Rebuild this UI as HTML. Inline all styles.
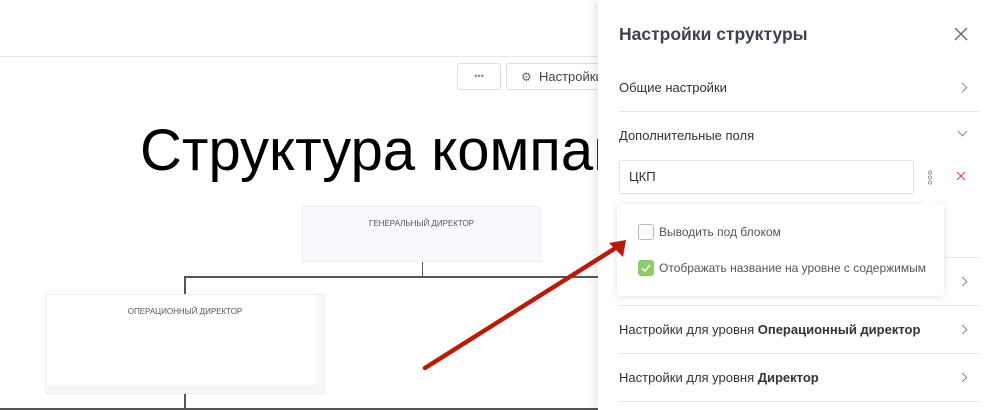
<!DOCTYPE html>
<html><head><meta charset="utf-8"><style>
*{box-sizing:border-box;margin:0;padding:0}
body{width:997px;height:410px;overflow:hidden;background:#fff;font-family:"Liberation Sans",sans-serif;position:relative}
.abs{position:absolute}
.panel{left:598px;top:0;width:399px;height:410px;background:#fff;box-shadow:-4px 0 8px rgba(0,0,0,.08)}
.row{position:absolute;left:21px;font-size:13px;color:#333}
.div{position:absolute;left:21px;width:360px;height:1px;background:#e6e6e6}
.chev{position:absolute;left:361px;width:7px;height:7px;border-right:1.2px solid #888;border-top:1.2px solid #888;transform:rotate(45deg)}
</style></head><body>
<div class="abs" style="left:0;top:56px;width:600px;height:1px;background:#e8e8e8"></div>
<div class="abs" style="left:457px;top:63px;width:44px;height:27px;border:1px solid #ddd;border-radius:3px;text-align:center;font-size:9px;color:#888;line-height:24px">•••</div>
<div class="abs" style="left:506px;top:63px;width:110px;height:27px;border:1px solid #ddd;border-radius:3px;font-size:13px;color:#444;line-height:25px;padding-left:14px"><span style="font-size:12px;color:#666">⚙</span>&nbsp;&nbsp;Настройки</div>
<div class="abs" style="left:140px;top:118px;font-size:58px;color:#000;white-space:nowrap;line-height:66px">Структура компании</div>
<div class="abs" style="left:302px;top:206px;width:239px;height:56px;background:#f8f9fc;border:1px solid #eceef3;font-size:8px;color:#555;text-align:center;padding-top:12px">ГЕНЕРАЛЬНЫЙ ДИРЕКТОР</div>
<div class="abs" style="left:422px;top:262px;width:1px;height:15px;background:#555"></div>
<div class="abs" style="left:184px;top:276px;width:420px;height:1.5px;background:#555"></div>
<div class="abs" style="left:184px;top:276px;width:1.5px;height:18px;background:#555"></div>
<div class="abs" style="left:45px;top:294px;width:280px;height:100px;background:#fff;border:1px solid #eceef3;box-shadow:inset -8px -8px 0 #f7f7f9;font-size:8px;color:#555;text-align:center;padding-top:12px">ОПЕРАЦИОННЫЙ ДИРЕКТОР</div>
<div class="abs" style="left:184px;top:394px;width:1.5px;height:16px;background:#555"></div>
<div class="abs" style="left:0;top:408px;width:600px;height:1.5px;background:#555"></div>

<div class="abs panel">
 <div class="abs" style="left:21px;top:24px;font-size:17.5px;font-weight:bold;color:#3d4250">Настройки структуры</div>
 <svg class="abs" style="left:356px;top:27px" width="14" height="14"><path d="M1 1L13 13M13 1L1 13" stroke="#666" stroke-width="1.3"/></svg>
 <div class="row" style="top:80px">Общие настройки</div><div class="chev" style="top:84px"></div>
 <div class="div" style="top:111px"></div>
 <div class="row" style="top:128px">Дополнительные поля</div>
 <div class="abs" style="left:361px;top:128px;width:7px;height:7px;border-right:1.2px solid #888;border-bottom:1.2px solid #888;transform:rotate(45deg)"></div>
 <div class="abs" style="left:21px;top:160px;width:295px;height:34px;border:1px solid #e2e2e2;border-radius:3px;font-size:13px;color:#333;line-height:32px;padding-left:9px">ЦКП</div>
 <svg class="abs" style="left:328px;top:170px" width="8" height="16"><circle cx="4" cy="2.5" r="1.6" fill="none" stroke="#999"/><circle cx="4" cy="7.5" r="1.6" fill="none" stroke="#999"/><circle cx="4" cy="12.5" r="1.6" fill="none" stroke="#999"/></svg>
 <svg class="abs" style="left:358px;top:171px" width="10" height="10"><path d="M1 1L9 9M9 1L1 9" stroke="#e05050" stroke-width="1.2"/></svg>
 <div class="div" style="top:257px"></div>
 <div class="chev" style="top:278px"></div>
 <div class="div" style="top:305px"></div>
 <div class="row" style="top:322px">Настройки для уровня <b>Операционный директор</b></div><div class="chev" style="top:326px"></div>
 <div class="div" style="top:353px"></div>
 <div class="row" style="top:370px">Настройки для уровня <b>Директор</b></div><div class="chev" style="top:374px"></div>
 <div class="div" style="top:401px"></div>
 <div class="abs" style="left:19px;top:204px;width:327px;height:92px;background:#fff;border-radius:4px;box-shadow:0 1px 8px rgba(0,0,0,.12)">
  <div class="abs" style="left:309px;top:-4px;width:8px;height:8px;background:#fff;transform:rotate(45deg)"></div>
  <div class="abs" style="left:21px;top:20px;width:16px;height:16px;border:1px solid #bbb;border-radius:3px"></div>
  <div class="abs" style="left:42px;top:21px;font-size:12px;color:#555">Выводить под блоком</div>
  <div class="abs" style="left:21px;top:56px;width:16px;height:16px;background:#8ccc6a;border-radius:3px"><svg width="16" height="16"><path d="M4 8.5L7 11L12 5" stroke="#fff" stroke-width="1.4" fill="none"/></svg></div>
  <div class="abs" style="left:42px;top:57px;font-size:12px;color:#555">Отображать название на уровне с содержимым</div>
 </div>
</div>
<svg class="abs" style="left:0;top:0" width="997" height="410"><path d="M425 368L614 249" stroke="#b81a0c" stroke-width="4.5" stroke-linecap="round"/><path d="M626 240L609 243L623 257Z" fill="#b81a0c"/></svg>
</body></html>
